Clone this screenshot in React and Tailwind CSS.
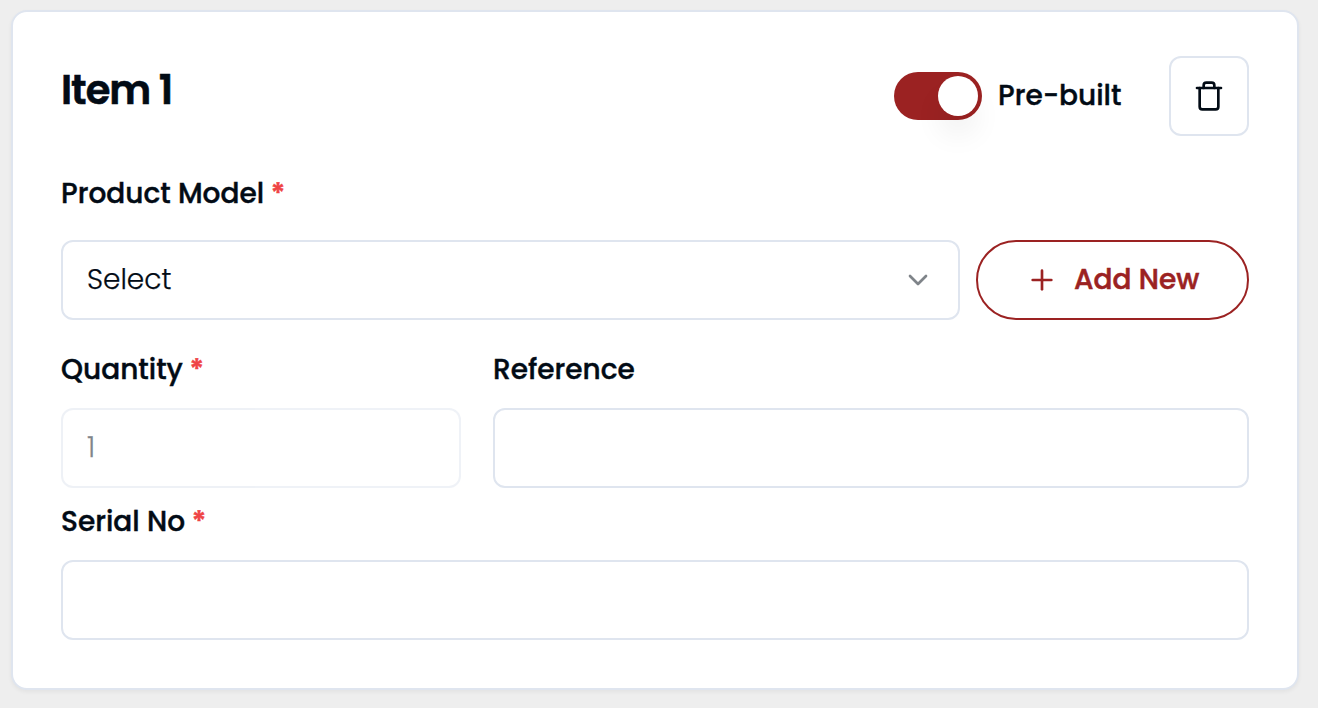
import React from "react";
import { ChevronDown, Plus, Trash } from "lucide-react";

function Label({ children, required }) {
  return (
    <label className="block h-7 whitespace-nowrap text-[28px] font-medium leading-7 [-webkit-text-stroke:0.4px]">
      {children}
      {required && <span className="font-semibold text-[#ef4444]"> *</span>}
    </label>
  );
}

export default function App() {
  return (
    <main className="h-[708px] bg-[#eeeeee] pl-[11px] pr-[19px] pt-[10px] font-[Poppins,Inter,sans-serif] text-[#020b15]">
      <section className="h-[680px] rounded-2xl border-2 border-[#dfe5ef] bg-white px-12 pt-11 shadow-[0_2px_4px_rgba(0,0,0,0.05)]">
        <header className="flex h-20 items-center">
          <h2 className="mb-3 flex-1 text-[40px] font-semibold leading-none tracking-tight [-webkit-text-stroke:0.6px]">Item 1</h2>
          <button className="flex h-12 w-[88px] items-center justify-end rounded-full bg-[#9b2222] p-1" aria-label="Pre-built">
            <span className="size-10 rounded-full bg-white shadow-[0_20px_30px_-2px_rgba(0,0,0,0.07)]" />
          </button>
          <span className="ml-4 w-[171px] whitespace-nowrap text-[28px] font-medium leading-7 [-webkit-text-stroke:0.4px]">Pre-built</span>
          <button className="flex size-20 items-center justify-center rounded-xl border-2 border-[#dfe5ef]" aria-label="Delete">
            <Trash size={32} />
          </button>
        </header>

        <div className="mt-11">
          <Label required>Product Model</Label>
          <div className="mt-8 flex gap-4">
            <button className="flex h-20 flex-1 items-center justify-between rounded-xl border-2 border-[#dfe5ef] px-6 text-[28px] font-light [-webkit-text-stroke:0.25px]">
              <span>Select</span>
              <ChevronDown size={32} className="opacity-50" />
            </button>
            <button className="flex h-20 w-[273px] items-center rounded-full border-2 border-[#9b2222] pl-12 text-[28px] font-medium text-[#9b2222] [-webkit-text-stroke:0.5px]">
              <Plus size={32} />
              <span className="ml-4 whitespace-nowrap">Add New</span>
            </button>
          </div>
        </div>

        <div className="mt-9 flex gap-8">
          <div className="w-[400px]">
            <Label required>Quantity</Label>
            <div className="mt-6 flex h-20 items-center rounded-xl border-2 border-[#dfe5ef] px-6 text-[28px] font-light opacity-50 [-webkit-text-stroke:0.25px]">1</div>
          </div>
          <div className="flex-1">
            <Label>Reference</Label>
            <div className="mt-6 h-20 rounded-xl border-2 border-[#dfe5ef]" />
          </div>
        </div>

        <div className="mt-5">
          <Label required>Serial No</Label>
          <div className="mt-6 h-20 rounded-xl border-2 border-[#dfe5ef]" />
        </div>
      </section>
    </main>
  );
}
